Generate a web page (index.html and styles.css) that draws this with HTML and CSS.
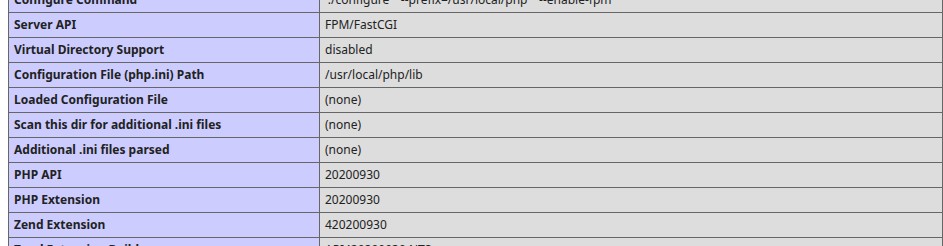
FILE: index.html
```html
<!DOCTYPE html>
<html>
<head>
<meta charset="utf-8">
<title>phpinfo()</title>
<link rel="stylesheet" href="styles.css">
</head>
<body>
<div class="info">
  <div class="e">Configure Command</div><div class="v">&#039;./configure&#039; &nbsp;&#039;--prefix=/usr/local/php&#039; &nbsp;&#039;--enable-fpm&#039;</div>
  <div class="e">Server API</div><div class="v">FPM/FastCGI</div>
  <div class="e">Virtual Directory Support</div><div class="v">disabled</div>
  <div class="e">Configuration File (php.ini) Path</div><div class="v">/usr/local/php/lib</div>
  <div class="e">Loaded Configuration File</div><div class="v">(none)</div>
  <div class="e">Scan this dir for additional .ini files</div><div class="v">(none)</div>
  <div class="e">Additional .ini files parsed</div><div class="v">(none)</div>
  <div class="e">PHP API</div><div class="v">20200930</div>
  <div class="e">PHP Extension</div><div class="v">20200930</div>
  <div class="e">Zend Extension</div><div class="v">420200930</div>
  <div class="e">Zend Extension Build</div><div class="v">API420200930,NTS</div>
  <div class="e">PHP Extension Build</div><div class="v">API20200930,NTS</div>
</div>
</body>
</html>
```

FILE: styles.css
```css
html {
  overflow: hidden;
  background: #fff;
}
body {
  margin: 0 0 0 8px;
  background-color: #fff;
  color: #222;
  font-family: "Noto Sans", "Open Sans", sans-serif;
}
.info {
  display: grid;
  grid-template-columns: 310px 1fr;
  gap: 1px;
  padding: 1px;
  width: 935px;
  box-sizing: border-box;
  margin-top: -13px;
  background: #666;
}
.e,
.v {
  font-size: 12px;
  line-height: 16px;
  padding: 4px 5px;
  white-space: nowrap;
  overflow: hidden;
}
.e {
  background-color: #ccf;
  font-weight: bold;
}
.v {
  background-color: #ddd;
}
```
